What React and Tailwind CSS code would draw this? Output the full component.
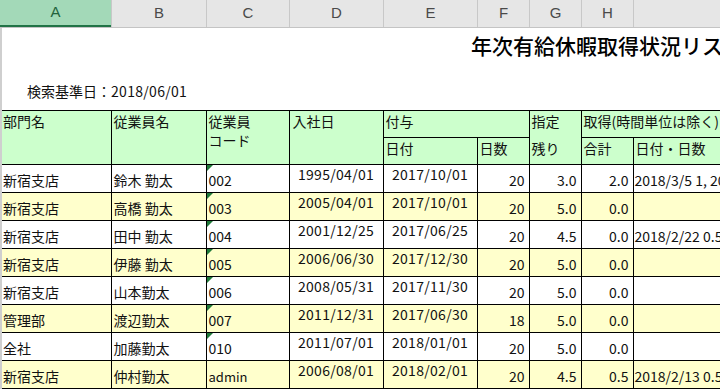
import React from "react";

const letters = [
  { l: "A", w: 111 },
  { l: "B", w: 95 },
  { l: "C", w: 83 },
  { l: "D", w: 94 },
  { l: "E", w: 94 },
  { l: "F", w: 52 },
  { l: "G", w: 52 },
  { l: "H", w: 52 },
  { l: "", w: 200 },
];

const rows = [
  ["新宿支店", "鈴木 勤太", "002", "1995/04/01", "2017/10/01", "20", "3.0", "2.0", "2018/3/5 1, 2018/4/2 1"],
  ["新宿支店", "高橋 勤太", "003", "2005/04/01", "2017/10/01", "20", "5.0", "0.0", ""],
  ["新宿支店", "田中 勤太", "004", "2001/12/25", "2017/06/25", "20", "4.5", "0.0", "2018/2/22 0.5"],
  ["新宿支店", "伊藤 勤太", "005", "2006/06/30", "2017/12/30", "20", "5.0", "0.0", ""],
  ["新宿支店", "山本勤太", "006", "2008/05/31", "2017/11/30", "20", "5.0", "0.0", ""],
  ["管理部", "渡辺勤太", "007", "2011/12/31", "2017/06/30", "18", "5.0", "0.0", ""],
  ["全社", "加藤勤太", "010", "2011/07/01", "2018/01/01", "20", "5.0", "0.0", ""],
  ["新宿支店", "仲村勤太", "admin", "2006/08/01", "2018/02/01", "20", "4.5", "0.5", "2018/2/13 0.5"],
];

const font = { fontFamily: '"Noto Sans CJK JP", "Noto Sans", sans-serif' };

function ColumnHeader() {
  return (
    <div className="flex h-[28px] bg-[#e6e6e6] border-b border-[#c4c4c4] box-border">
      {letters.map((c, i) => (
        <div
          key={i}
          style={{ width: c.w, minWidth: c.w }}
          className={
            i === 0
              ? "flex items-center justify-center bg-[#a3d9b8] border-b-2 border-[#217346] text-[#23633d] text-[15px]"
              : "flex items-center justify-center border-l border-[#c8c8c8] text-[#4a4a4a] text-[15px]"
          }
        >
          <span style={{ fontFamily: '"Liberation Sans", Arial, sans-serif' }}>{c.l}</span>
        </div>
      ))}
    </div>
  );
}

export default function App() {
  const th = "border border-black bg-[#ccffcc] align-top text-left font-normal px-[2px] pt-[1px] leading-[18px]";
  return (
    <div className="w-[720px] h-[390px] overflow-hidden bg-white text-[14px] text-[#111]" style={font}>
      <ColumnHeader />
      <div className="border-l-2 border-[#cfcfcf]">
        <div className="h-[82px] flex flex-col">
          <div className="pt-[5px] pl-[469px] text-[21px] leading-[24px] whitespace-nowrap font-medium text-black">
            年次有給休暇取得状況リスト
          </div>
          <div className="mt-[26px] pl-[25px] leading-[16px] whitespace-nowrap">
            検索基準日：<span className="tracking-[0.3px]">2018/06/01</span>
          </div>
        </div>
        <table className="table-fixed border-collapse w-[831px]">
          <colgroup>
            <col className="w-[109px]" />
            <col className="w-[95px]" />
            <col className="w-[83px]" />
            <col className="w-[94px]" />
            <col className="w-[94px]" />
            <col className="w-[52px]" />
            <col className="w-[52px]" />
            <col className="w-[52px]" />
            <col className="w-[200px]" />
          </colgroup>
          <thead>
            <tr className="h-[27px]">
              <th rowSpan={2} className={th + " border-l-0 pl-[1px]"}>部門名</th>
              <th rowSpan={2} className={th}>従業員名</th>
              <th rowSpan={2} className={th + " leading-[19px]"}>
                <div>従業員</div>
                <div>コード</div>
              </th>
              <th rowSpan={2} className={th + " pl-[3px]"}>入社日</th>
              <th colSpan={2} className={th}>付与</th>
              <th rowSpan={2} className={th}>
                <div className="h-[27px]">指定</div>
                <div>残り</div>
              </th>
              <th colSpan={2} className={th + " whitespace-nowrap"}>取得(時間単位は除く)</th>
            </tr>
            <tr className="h-[27px]">
              <th className={th}>日付</th>
              <th className={th}>日数</th>
              <th className={th}>合計</th>
              <th className={th}>日付・日数</th>
            </tr>
          </thead>
          <tbody>
            {rows.map((r, i) => {
              const bg = i % 2 === 1 ? "bg-[#ffffcc]" : "bg-white";
              const td = "border border-black whitespace-nowrap overflow-hidden leading-[18px] " + bg;
              return (
                <tr key={i} className="h-[28px]">
                  <td className={td + " border-l-0 pl-[1px] pt-[2px] align-middle"}>{r[0]}</td>
                  <td className={td + " pl-[2px] pt-[2px] align-middle"}>{r[1]}</td>
                  <td className={td + " pl-[2px] pt-[3px] align-middle relative"}>
                    {r[2] !== "admin" && (
                      <span className="absolute left-0 top-0 w-0 h-0 border-t-[6px] border-r-[6px] border-t-[#1f7a3a] border-r-transparent" />
                    )}
                    <span className={r[2] === "admin" ? "text-[13px]" : ""}>{r[2]}</span>
                  </td>
                  <td className={td + " text-center align-top tracking-[0.3px]"}>{r[3]}</td>
                  <td className={td + " text-center align-top tracking-[0.3px]"}>{r[4]}</td>
                  <td className={td + " text-right pr-[4px] pt-[3px] align-middle"}>{r[5]}</td>
                  <td className={td + " text-right pr-[4px] pt-[3px] align-middle"}>{r[6]}</td>
                  <td className={td + " text-right pr-[4px] pt-[3px] align-middle"}>{r[7]}</td>
                  <td className={td + " pl-[1px] pt-[2px] align-middle"}>{r[8]}</td>
                </tr>
              );
            })}
          </tbody>
        </table>
      </div>
    </div>
  );
}
